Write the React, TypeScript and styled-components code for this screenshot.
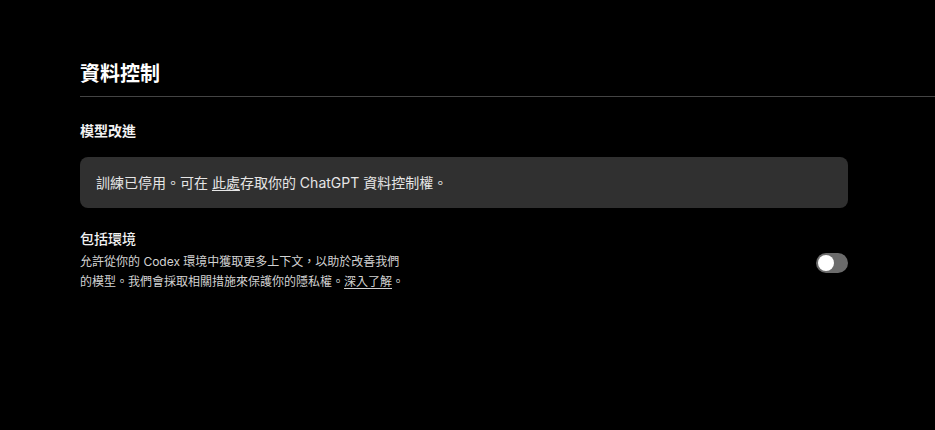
import React, { useState } from 'react';
import styled, { createGlobalStyle } from 'styled-components';

const GlobalStyle = createGlobalStyle`
  html, body {
    margin: 0;
    padding: 0;
    background: #000;
  }
  body {
    font-family: Inter, "Noto Sans CJK TC", sans-serif;
    color: #fff;
    -webkit-font-smoothing: antialiased;
  }
`;

const Page = styled.div`
  width: 935px;
  height: 430px;
  padding: 60px 0 0 80px;
  box-sizing: border-box;
  background: #000;
  overflow: hidden;
`;

const Header = styled.div`
  padding-bottom: 8px;
  border-bottom: 1px solid #444;
`;

const Title = styled.h1`
  margin: 0;
  font-size: 20px;
  line-height: 28px;
  font-weight: 600;
  color: #fff;
`;

const Content = styled.div`
  width: 768px;
  display: flex;
  flex-direction: column;
`;

const SectionTitle = styled.h2`
  margin: 24px 0 16px;
  font-size: 14px;
  line-height: 20px;
  font-weight: 600;
  color: #f2f2f2;
`;

const Notice = styled.div`
  background: #303030;
  border-radius: 8px;
  padding: 16px;
  font-size: 14px;
  line-height: 19px;
  color: #e6e6e6;
`;

const Link = styled.a`
  color: inherit;
  text-decoration: underline;
  text-underline-offset: 2px;
  cursor: pointer;
`;

const SettingRow = styled.div`
  margin-top: 21px;
  display: flex;
  align-items: center;
  justify-content: space-between;
`;

const SettingText = styled.div`
  display: flex;
  flex-direction: column;
  gap: 3px;
`;

const SettingLabel = styled.div`
  font-size: 14px;
  line-height: 20px;
  font-weight: 500;
  color: #f2f2f2;
`;

const SettingDesc = styled.div`
  font-size: 12px;
  line-height: 20px;
  color: #d2d2d2;
`;

const Switch = styled.button<{ $on: boolean }>`
  position: relative;
  width: 32px;
  height: 20px;
  margin-top: 5px;
  padding: 0;
  border: none;
  border-radius: 10px;
  background: ${({ $on }) => ($on ? '#10a37f' : '#6b6b6b')};
  cursor: pointer;
  flex-shrink: 0;

  &::after {
    content: '';
    position: absolute;
    top: 2px;
    left: ${({ $on }) => ($on ? '14px' : '2px')};
    width: 16px;
    height: 16px;
    border-radius: 50%;
    background: #fff;
    transition: left 0.15s;
  }
`;

const App: React.FC = () => {
  const [on, setOn] = useState(false);

  return (
    <Page lang="zh-Hant">
      <GlobalStyle />
      <Header>
        <Title>資料控制</Title>
      </Header>
      <Content>
        <SectionTitle>模型改進</SectionTitle>
        <Notice>
          訓練已停用。可在 <Link>此處</Link>存取你的 ChatGPT 資料控制權。
        </Notice>
        <SettingRow>
          <SettingText>
            <SettingLabel>包括環境</SettingLabel>
            <SettingDesc>
              允許從你的 Codex 環境中獲取更多上下文，以助於改善我們
              <br />
              的模型。我們會採取相關措施來保護你的隱私權。<Link>深入了解</Link>。
            </SettingDesc>
          </SettingText>
          <Switch $on={on} onClick={() => setOn(!on)} type="button" aria-label="包括環境" />
        </SettingRow>
      </Content>
    </Page>
  );
};

export default App;
